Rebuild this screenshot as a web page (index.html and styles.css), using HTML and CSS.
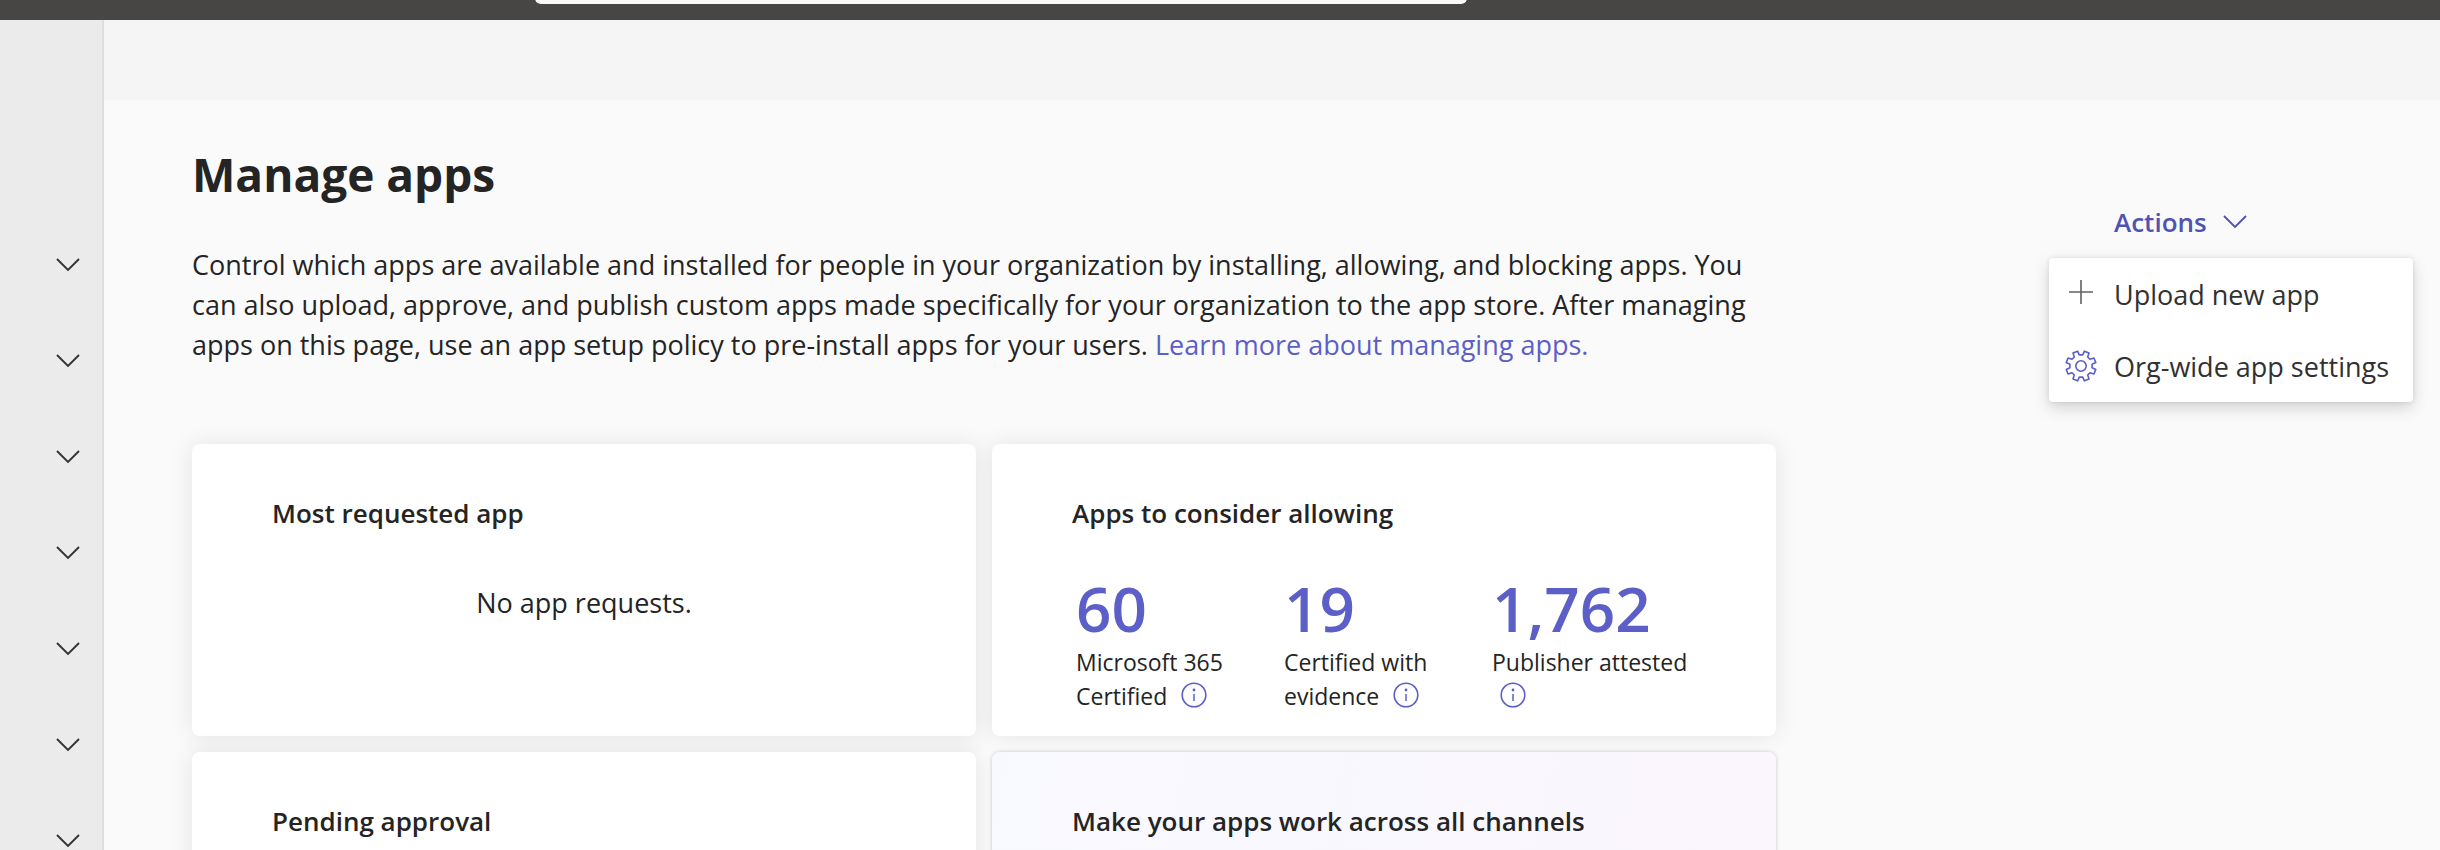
FILE: index.html
```html
<!DOCTYPE html>
<html lang="en">
<head>
    <meta charset="UTF-8">
    <meta name="viewport" content="width=device-width, initial-scale=1.0">
    <title>Manage apps</title>
    <link rel="stylesheet" href="styles.css">
</head>
<body>
    <!-- shared icons -->
    <svg class="sprite" aria-hidden="true">
        <symbol id="chevron" viewBox="0 0 24 14">
            <path d="M1 1 L12 12 L23 1" fill="none" stroke="currentColor" stroke-width="1.8"/>
        </symbol>
        <symbol id="info" viewBox="0 0 26 26">
            <circle cx="13" cy="13" r="11.8" fill="none" stroke="currentColor" stroke-width="1.6"/>
            <circle cx="13" cy="8" r="1.4" fill="currentColor"/>
            <path d="M13 12 V19" stroke="currentColor" stroke-width="1.5"/>
        </symbol>
    </svg>

    <header class="topbar">
        <input class="search" type="search" aria-label="Search">
    </header>

    <div class="layout">
        <nav class="sidebar">
            <button class="nav-item" aria-label="Expand Teams"><svg><use href="#chevron"/></svg></button>
            <button class="nav-item" aria-label="Expand Users"><svg><use href="#chevron"/></svg></button>
            <button class="nav-item" aria-label="Expand Devices"><svg><use href="#chevron"/></svg></button>
            <button class="nav-item" aria-label="Expand Apps"><svg><use href="#chevron"/></svg></button>
            <button class="nav-item" aria-label="Expand Meetings"><svg><use href="#chevron"/></svg></button>
            <button class="nav-item" aria-label="Expand Messaging"><svg><use href="#chevron"/></svg></button>
            <button class="nav-item" aria-label="Expand Voice"><svg><use href="#chevron"/></svg></button>
        </nav>

        <main class="main">
            <div class="band"></div>
            <div class="page">
                <div class="content">
                    <h1>Manage apps</h1>
                    <p class="intro">Control which apps are available and installed for people in your organization by installing, allowing, and blocking apps. You can also upload, approve, and publish custom apps made specifically for your organization to the app store. After managing apps on this page, use an app setup policy to pre-install apps for your users. <a href="#">Learn more about managing apps.</a></p>

                    <div class="cards">
                        <section class="card">
                            <h2>Most requested app</h2>
                            <p class="empty">No app requests.</p>
                        </section>
                        <section class="card">
                            <h2>Apps to consider allowing</h2>
                            <div class="stats">
                                <div class="stat">
                                    <div class="number">60</div>
                                    <div class="label">Microsoft 365 Certified <svg class="info"><use href="#info"/></svg></div>
                                </div>
                                <div class="stat">
                                    <div class="number">19</div>
                                    <div class="label">Certified with evidence <svg class="info"><use href="#info"/></svg></div>
                                </div>
                                <div class="stat">
                                    <div class="number">1,762</div>
                                    <div class="label">Publisher attested <svg class="info"><use href="#info"/></svg></div>
                                </div>
                            </div>
                        </section>
                        <section class="card">
                            <h2>Pending approval</h2>
                        </section>
                        <section class="card promo">
                            <h2>Make your apps work across all channels</h2>
                        </section>
                    </div>
                </div>

                <div class="actions">
                    <button class="actions-btn" aria-expanded="true">Actions <svg><use href="#chevron"/></svg></button>
                    <div class="menu">
                        <button class="menu-item">
                            <svg class="plus" viewBox="0 0 32 32"><path d="M16 2 V26 M4 14 H28" stroke="currentColor" stroke-width="1.6"/></svg>
                            Upload new app
                        </button>
                        <button class="menu-item">
                            <svg class="gear" viewBox="0 0 32 32" fill="none" stroke="currentColor" stroke-width="1.6" stroke-linejoin="round">
                                <path d="M17.7 4.9 L19.4 1.2 L24 3.1 L22.7 7 L25 9.3 L28.9 8 L30.8 12.6 L27.1 14.3 V17.7 L30.8 19.4 L28.9 24 L25 22.7 L22.7 25 L24 28.9 L19.4 30.8 L17.7 27.1 H14.3 L12.6 30.8 L8 28.9 L9.3 25 L7 22.7 L3.1 24 L1.2 19.4 L4.9 17.7 V14.3 L1.2 12.6 L3.1 8 L7 9.3 L9.3 7 L8 3.1 L12.6 1.2 L14.3 4.9 Z"/>
                                <circle cx="16" cy="16" r="5.2"/>
                            </svg>
                            Org-wide app settings
                        </button>
                    </div>
                </div>
            </div>
        </main>
    </div>
</body>
</html>
```

FILE: styles.css
```css
* {
    box-sizing: border-box;
}

body {
    margin: 0;
    height: 100vh;
    overflow: hidden;
    display: flex;
    flex-direction: column;
    font-family: "Open Sans", "Noto Sans", sans-serif;
    font-size: 27px;
    color: #242424;
    background-color: #fafafa;
}

button {
    font: inherit;
    border: 0;
    padding: 0;
    background: none;
    cursor: pointer;
}

h1, h2, p {
    margin: 0;
}

.sprite {
    display: none;
}

.topbar {
    flex: none;
    display: flex;
    align-items: flex-end;
    height: 20px;
    padding: 0 973px 16px 535px;
    background-color: #484644;
}

.search {
    flex: 1;
    height: 60px;
    border: 0;
    border-radius: 6px;
    background-color: #faf9f8;
}

.layout {
    flex: 1;
    min-height: 0;
    display: flex;
}

.sidebar {
    flex: none;
    width: 104px;
    padding-top: 197px;
    overflow: hidden;
    background-color: #ebebeb;
    border-right: 2px solid #dedede;
}

.nav-item {
    display: flex;
    align-items: center;
    justify-content: flex-end;
    width: 100%;
    height: 96px;
    padding-right: 22px;
    color: #323130;
}

.nav-item svg,
.actions-btn svg {
    width: 24px;
    height: 14px;
}

.main {
    flex: 1;
    min-width: 0;
    overflow: hidden;
}

.band {
    height: 80px;
    background-color: #f5f5f5;
}

.page {
    display: flex;
    justify-content: space-between;
    padding: 38px 27px 0 88px;
}

.content {
    flex: 0 1 1584px;
}

h1 {
    font-size: 46px;
    line-height: 72px;
    font-weight: 700;
}

.intro {
    max-width: 1560px;
    margin-top: 35px;
    line-height: 40px;
}

.intro a {
    color: #5b5fc7;
    text-decoration: none;
}

.cards {
    display: grid;
    grid-template-columns: 1fr 1fr;
    gap: 16px;
    margin-top: 79px;
}

.card {
    height: 292px;
    padding: 49px 80px 0;
    border-radius: 8px;
    background-color: #fff;
    box-shadow: 0 0 24px rgba(0, 0, 0, 0.09);
}

.card.promo {
    background: linear-gradient(100deg, #f8f9ff, #fbf5fd);
    box-shadow: 0 0 4px rgba(0, 0, 0, 0.2);
}

h2 {
    font-size: 26px;
    line-height: 40px;
    font-weight: 600;
}

.empty {
    margin-top: 50px;
    line-height: 40px;
    text-align: center;
}

.stats {
    display: grid;
    grid-template-columns: repeat(3, 1fr);
    margin-top: 40px;
}

.stat {
    padding-left: 4px;
}

.number {
    font-size: 62px;
    line-height: 70px;
    font-weight: 600;
    color: #5b5fc7;
}

.label {
    margin-top: 2px;
    font-size: 23px;
    line-height: 34px;
}

.info {
    width: 26px;
    height: 26px;
    margin-left: 8px;
    vertical-align: -3px;
    color: #5b5fc7;
}

.actions {
    position: relative;
    flex: none;
    width: 364px;
    padding-top: 61px;
}

.actions-btn {
    display: flex;
    align-items: center;
    gap: 16px;
    height: 46px;
    margin-left: 65px;
    font-size: 26px;
    font-weight: 600;
    color: #4f52b2;
}

.menu {
    position: absolute;
    top: 120px;
    left: 0;
    right: 0;
    border-radius: 4px;
    background-color: #fff;
    box-shadow: 0 6px 16px rgba(0, 0, 0, 0.16), 0 0 4px rgba(0, 0, 0, 0.1);
}

.menu-item {
    display: flex;
    align-items: center;
    gap: 17px;
    width: 100%;
    height: 72px;
    padding-left: 16px;
    color: #323130;
    white-space: nowrap;
}

.menu-item svg {
    flex: none;
    width: 32px;
    height: 32px;
}

.plus {
    color: #616161;
}

.gear {
    color: #5b5fc7;
}
```
